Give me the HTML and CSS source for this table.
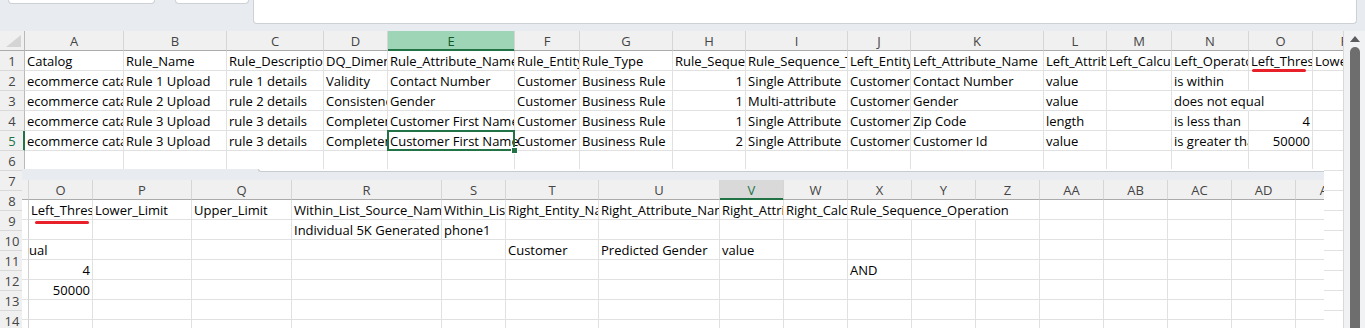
FILE: index.html
```html
<!DOCTYPE html>
<html lang="en">
<head>
    <meta charset="UTF-8">
    <meta name="viewport" content="width=device-width, initial-scale=1.0">
    <title>Rules Upload - Sheet1</title>
    <link rel="stylesheet" href="styles.css">
</head>
<body>
    <div class="toolbar">
        <div class="tb-box name-box"></div>
        <div class="tb-box fx-box"></div>
        <div class="tb-box formula-box"></div>
    </div>

    <div class="workbook">
        <div class="sheet">
            <table class="grid main-grid">
                <colgroup>
                    <col class="w25"><col class="w99"><col class="w103"><col class="w97"><col class="w64"><col class="w127"><col class="w65"><col class="w93"><col class="w73"><col class="w102"><col class="w63"><col class="w133"><col class="w63"><col class="w65"><col class="w77"><col class="w64"><col class="w64">
                </colgroup>
                <thead>
                    <tr>
                        <th class="corner"><svg width="24" height="19" viewBox="0 0 24 19"><polygon points="21,4 21,16 6,16" fill="#d4d4d4"/></svg></th>
                        <th>A</th><th>B</th><th>C</th><th>D</th><th class="col-active">E</th><th>F</th><th>G</th><th>H</th><th>I</th><th>J</th><th>K</th><th>L</th><th>M</th><th>N</th><th>O</th><th>P</th>
                    </tr>
                </thead>
                <tbody>
                    <tr>
                        <th class="rh">1</th>
                        <td>Catalog</td><td>Rule_Name</td><td>Rule_Description</td><td>DQ_Dimension</td><td>Rule_Attribute_Name</td><td>Rule_Entity_Name</td><td>Rule_Type</td><td>Rule_Sequence</td><td>Rule_Sequence_Type</td><td>Left_Entity_Name</td><td>Left_Attribute_Name</td><td>Left_Attribute_Type</td><td>Left_Calculation</td><td>Left_Operator</td><td>Left_Threshold</td><td>Lower_Limit</td>
                    </tr>
                    <tr>
                        <th class="rh">2</th>
                        <td>ecommerce catalog</td><td>Rule 1 Upload</td><td>rule 1 details</td><td>Validity</td><td>Contact Number</td><td>Customer</td><td>Business Rule</td><td class="num">1</td><td>Single Attribute</td><td>Customer</td><td>Contact Number</td><td>value</td><td></td><td>is within</td><td></td><td></td>
                    </tr>
                    <tr>
                        <th class="rh">3</th>
                        <td>ecommerce catalog</td><td>Rule 2 Upload</td><td>rule 2 details</td><td>Consistency</td><td>Gender</td><td>Customer</td><td>Business Rule</td><td class="num">1</td><td>Multi-attribute</td><td>Customer</td><td>Gender</td><td>value</td><td></td><td class="spill">does not equal</td><td></td><td></td>
                    </tr>
                    <tr>
                        <th class="rh">4</th>
                        <td>ecommerce catalog</td><td>Rule 3 Upload</td><td>rule 3 details</td><td>Completeness</td><td>Customer First Name</td><td>Customer</td><td>Business Rule</td><td class="num">1</td><td>Single Attribute</td><td>Customer</td><td>Zip Code</td><td>length</td><td></td><td>is less than</td><td class="num">4</td><td></td>
                    </tr>
                    <tr>
                        <th class="rh row-active">5</th>
                        <td>ecommerce catalog</td><td>Rule 3 Upload</td><td>rule 3 details</td><td>Completeness</td><td class="selected">Customer First Name</td><td>Customer</td><td>Business Rule</td><td class="num">2</td><td>Single Attribute</td><td>Customer</td><td>Customer Id</td><td>value</td><td></td><td>is greater than</td><td class="num">50000</td><td></td>
                    </tr>
                    <tr><th class="rh">6</th><td></td><td></td><td></td><td></td><td></td><td></td><td></td><td></td><td></td><td></td><td></td><td></td><td></td><td></td><td></td><td></td></tr>
                    <tr><th class="rh">7</th><td></td><td></td><td></td><td></td><td></td><td></td><td></td><td></td><td></td><td></td><td></td><td></td><td></td><td></td><td></td><td></td></tr>
                    <tr><th class="rh">8</th><td></td><td></td><td></td><td></td><td></td><td></td><td></td><td></td><td></td><td></td><td></td><td></td><td></td><td></td><td></td><td></td></tr>
                    <tr><th class="rh">9</th><td></td><td></td><td></td><td></td><td></td><td></td><td></td><td></td><td></td><td></td><td></td><td></td><td></td><td></td><td></td><td></td></tr>
                    <tr><th class="rh">10</th><td></td><td></td><td></td><td></td><td></td><td></td><td></td><td></td><td></td><td></td><td></td><td></td><td></td><td></td><td></td><td></td></tr>
                    <tr><th class="rh">11</th><td></td><td></td><td></td><td></td><td></td><td></td><td></td><td></td><td></td><td></td><td></td><td></td><td></td><td></td><td></td><td></td></tr>
                    <tr><th class="rh">12</th><td></td><td></td><td></td><td></td><td></td><td></td><td></td><td></td><td></td><td></td><td></td><td></td><td></td><td></td><td></td><td></td></tr>
                    <tr><th class="rh">13</th><td></td><td></td><td></td><td></td><td></td><td></td><td></td><td></td><td></td><td></td><td></td><td></td><td></td><td></td><td></td><td></td></tr>
                    <tr><th class="rh">14</th><td></td><td></td><td></td><td></td><td></td><td></td><td></td><td></td><td></td><td></td><td></td><td></td><td></td><td></td><td></td><td></td></tr>
                </tbody>
            </table>

            <span class="mark mark-top"></span>

            <!-- second view of the same sheet, scrolled right to column O -->
            <div class="pasted">
                <div class="strip"><div class="fx-edge"></div></div>
                <table class="grid side-grid">
                    <colgroup>
                        <col class="w7"><col class="w64"><col class="w99"><col class="w100"><col class="w150"><col class="w64"><col class="w93"><col class="w121"><col class="w64"><col class="w64"><col class="w64"><col class="w64"><col class="w64"><col class="w64"><col class="w64"><col class="w64"><col class="w64"><col class="w64">
                    </colgroup>
                    <thead>
                        <tr>
                            <th class="stub"></th>
                            <th>O</th><th>P</th><th>Q</th><th>R</th><th>S</th><th>T</th><th>U</th><th class="col-current">V</th><th>W</th><th>X</th><th>Y</th><th>Z</th><th>AA</th><th>AB</th><th>AC</th><th>AD</th><th>AE</th>
                        </tr>
                    </thead>
                    <tbody>
                        <tr>
                            <td class="stub"></td>
                            <td>Left_Threshold</td><td>Lower_Limit</td><td>Upper_Limit</td><td>Within_List_Source_Name</td><td>Within_List_Attribute</td><td>Right_Entity_Name</td><td>Right_Attribute_Name</td><td>Right_Attribute_Type</td><td>Right_Calculation</td><td class="spill">Rule_Sequence_Operation</td><td class="spill"></td><td></td><td></td><td></td><td></td><td></td><td></td>
                        </tr>
                        <tr>
                            <td class="stub"></td>
                            <td></td><td></td><td></td><td>Individual 5K Generated Phones</td><td>phone1</td><td></td><td></td><td></td><td></td><td></td><td></td><td></td><td></td><td></td><td></td><td></td><td></td>
                        </tr>
                        <tr>
                            <td class="stub"></td>
                            <td class="tail">ual</td><td></td><td></td><td></td><td></td><td>Customer</td><td>Predicted Gender</td><td>value</td><td></td><td></td><td></td><td></td><td></td><td></td><td></td><td></td><td></td>
                        </tr>
                        <tr>
                            <td class="stub"></td>
                            <td class="num">4</td><td></td><td></td><td></td><td></td><td></td><td></td><td></td><td></td><td>AND</td><td></td><td></td><td></td><td></td><td></td><td></td><td></td>
                        </tr>
                        <tr>
                            <td class="stub"></td>
                            <td class="num">50000</td><td></td><td></td><td></td><td></td><td></td><td></td><td></td><td></td><td></td><td></td><td></td><td></td><td></td><td></td><td></td><td></td>
                        </tr>
                        <tr><td class="stub"></td><td></td><td></td><td></td><td></td><td></td><td></td><td></td><td></td><td></td><td></td><td></td><td></td><td></td><td></td><td></td><td></td><td></td></tr>
                        <tr><td class="stub"></td><td></td><td></td><td></td><td></td><td></td><td></td><td></td><td></td><td></td><td></td><td></td><td></td><td></td><td></td><td></td><td></td><td></td></tr>
                    </tbody>
                </table>
                <span class="mark mark-bottom"></span>
            </div>
        </div>

        <div class="vscroll">
            <span class="arrow-up"></span>
            <span class="thumb"></span>
        </div>
    </div>
</body>
</html>
```

FILE: styles.css
```css
body {
    margin: 0;
    background-color: #e8ebef;
    font-family: "Open Sans", Arial, sans-serif;
    font-size: 13px;
    color: #000;
    overflow: hidden;
}

/* name box / fx / formula bar */
.toolbar {
    display: flex;
    align-items: flex-start;
    height: 31px;
    padding-left: 8px;
}
.tb-box {
    background-color: #fff;
    border: 1px solid #cdd0d4;
    border-top: none;
    box-sizing: border-box;
    border-radius: 0 0 4px 4px;
}
.name-box {
    width: 147px;
    height: 4px;
    margin-right: 20px;
}
.fx-box {
    width: 74px;
    height: 4px;
    margin-right: 4px;
}
.formula-box {
    flex: 1;
    height: 24px;
    margin-right: 8px;
}

.workbook {
    display: flex;
    height: 297px;
    background-color: #fff;
}
.sheet {
    position: relative;
    width: 1343px;
    overflow: hidden;
}

/* cell grid */
.grid {
    border-collapse: separate;
    border-spacing: 0;
    table-layout: fixed;
}
.main-grid {
    width: 1377px;
}
.side-grid {
    width: 1338px;
}
.grid tr {
    height: 20px;
}
.grid th,
.grid td {
    padding: 1px 2px 0;
    border-right: 1px solid #e1e1e1;
    border-bottom: 1px solid #e1e1e1;
    white-space: nowrap;
    overflow: hidden;
    vertical-align: top;
    line-height: 18px;
    font-weight: normal;
    text-align: left;
}
.grid thead th {
    background-color: #f0f0f0;
    color: #444;
    text-align: center;
    border-right-color: #d6d6d6;
    border-bottom-color: #ababab;
}
.grid .rh {
    padding: 1px 0 0;
    background-color: #f0f0f0;
    color: #444;
    text-align: center;
    border-right-color: #b9b9b9;
    border-bottom-color: #d9d9d9;
}
.grid thead .corner {
    padding: 0;
    border-right-color: #b9b9b9;
}
.corner svg {
    display: block;
}
.grid .num {
    text-align: right;
}
.grid .spill {
    overflow: visible;
    border-right-color: transparent;
}
.grid .tail {
    padding-left: 0;
}

/* active column, row and cell */
.grid thead .col-active {
    background-color: #9fd5b7;
    color: #0e5a2b;
    border-bottom-color: #217346;
    box-shadow: inset 0 -1px 0 #217346;
}
.grid thead .col-current {
    background-color: #d9d9d9;
    color: #217346;
    border-bottom-color: #217346;
    box-shadow: inset 0 -1px 0 #217346;
}
.grid .row-active {
    color: #217346;
    border-right-color: #217346;
    box-shadow: inset -1px 0 0 #217346;
}
.grid .selected {
    position: relative;
    overflow: visible;
}
.selected::before {
    content: "";
    position: absolute;
    top: -1px;
    left: -1px;
    right: -1px;
    bottom: -1px;
    border: 2px solid #217346;
}
.selected::after {
    content: "";
    position: absolute;
    right: -4px;
    bottom: -4px;
    width: 5px;
    height: 5px;
    background-color: #217346;
    border: 1px solid #fff;
}

/* second window */
.pasted {
    position: absolute;
    left: 22px;
    top: 138px;
    width: 1302px;
    bottom: 0;
    background-color: #fff;
    overflow: hidden;
}
.strip {
    height: 11px;
    background-color: #e8ebef;
}
.fx-edge {
    margin-left: 236px;
    height: 3px;
    background-color: #fff;
    border: 1px solid #c8cbcf;
    border-top: none;
    border-right: none;
    border-bottom-left-radius: 4px;
    box-sizing: border-box;
}
.grid .stub {
    padding: 0;
    background-color: #fff;
    border-right-color: #cfcfcf;
}
.grid thead .stub {
    background-color: #f0f0f0;
    border-right-color: #d6d6d6;
}

/* red underlines */
.mark {
    position: absolute;
    height: 3px;
    background-color: #e8202a;
    border-radius: 2px;
}
.mark-top {
    left: 1252px;
    top: 38px;
    width: 54px;
}
.mark-bottom {
    left: 13px;
    top: 52px;
    width: 54px;
}

/* vertical scrollbar */
.vscroll {
    width: 22px;
    box-sizing: border-box;
    padding-left: 6px;
    background-color: #f1f2f4;
    border-left: 1px solid #d9d9d9;
    display: flex;
    flex-direction: column;
}
.arrow-up {
    width: 0;
    height: 0;
    margin-top: 5px;
    border-left: 5px solid transparent;
    border-right: 5px solid transparent;
    border-bottom: 6px solid #5c5c5c;
}
.thumb {
    flex: 1;
    width: 10px;
    margin-top: 5px;
    background-color: #6e6e6e;
    border-radius: 5px 5px 0 0;
}

.w7 { width: 7px; }
.w25 { width: 25px; }
.w63 { width: 63px; }
.w64 { width: 64px; }
.w65 { width: 65px; }
.w73 { width: 73px; }
.w77 { width: 77px; }
.w93 { width: 93px; }
.w97 { width: 97px; }
.w99 { width: 99px; }
.w100 { width: 100px; }
.w102 { width: 102px; }
.w103 { width: 103px; }
.w121 { width: 121px; }
.w127 { width: 127px; }
.w133 { width: 133px; }
.w150 { width: 150px; }
```
